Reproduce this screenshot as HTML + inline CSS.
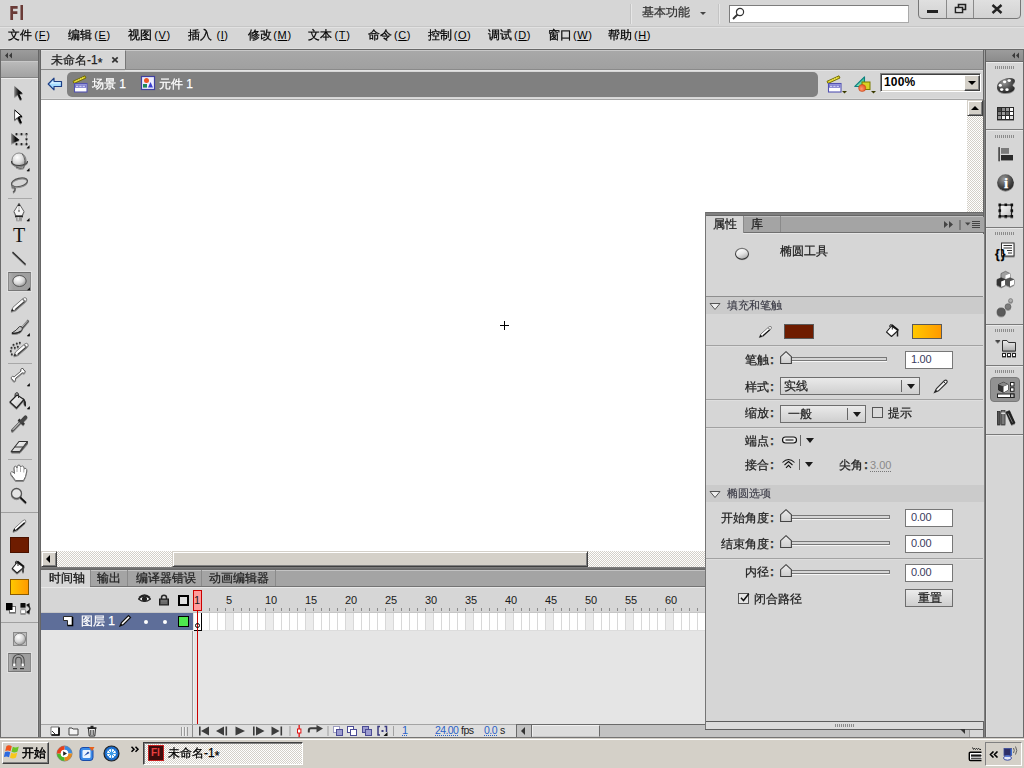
<!DOCTYPE html>
<html lang="zh-CN">
<head>
<meta charset="utf-8">
<title>未命名-1* - Flash</title>
<style>
html,body{margin:0;padding:0;}
body{width:1024px;height:768px;overflow:hidden;background:#d6d6d6;position:relative;
 font-family:"Liberation Sans","WenQuanYi Zen Hei","Noto Sans CJK SC",sans-serif;font-size:12px;color:#000;}
div,span,svg{position:absolute;box-sizing:border-box;}
.t{white-space:nowrap;line-height:14px;height:14px;-webkit-text-stroke:0.25px currentColor;}
.n{-webkit-text-stroke:0 !important;}
.c{position:static;display:inline-block;width:6px;text-align:center;font-weight:bold;color:#333;}
.m u{text-decoration:underline;}
.sep{background:#a0a0a0;height:1px;}
.vb{background:#fff;border:1px solid #777;}
.vb span{left:5px;top:1px;color:#3a3a60;line-height:14px;letter-spacing:-0.300px;}
.grip{height:3px;width:20px;background:repeating-linear-gradient(90deg,#8c8c8c 0 1px,transparent 1px 2px);}
.dith{background-color:#fff;background-image:conic-gradient(#d4d0c8 25%,#fff 0 50%,#d4d0c8 0 75%,#fff 0);background-size:2px 2px;}
.sbtn{background:#d4d0c8;border:1px solid #d4d0c8;border-right-color:#404040;border-bottom-color:#404040;box-shadow:inset 1px 1px 0 #fff, inset -1px -1px 0 #808080;}
</style>
</head>
<body>
<!-- title bar -->
<div style="left:0;top:0;width:1024px;height:27px;background:#d6d6d6"></div>
<div style="left:0;top:26px;width:1024px;height:1px;background:#c6c6c6"></div>
<div style="left:0;top:27px;width:1024px;height:1px;background:#e2e2e2;z-index:1"></div>
<div style="left:0;top:28px;width:1024px;height:21px;background:#d6d6d6"></div>
<div style="left:0;top:48px;width:1024px;height:1px;background:#dedede"></div>
<div class="t n" style="left:9px;top:1px;font:bold 20px/24px 'DejaVu Sans Condensed','DejaVu Sans','Liberation Sans',sans-serif;font-stretch:condensed;height:24px;color:#6a3b37;letter-spacing:0.5px;transform:scaleX(0.8);transform-origin:0 0">Fl</div>
<div style="left:630px;top:4px;width:1px;height:20px;background:#c4c4c4"></div>
<div style="left:631px;top:4px;width:1px;height:20px;background:#e6e6e6"></div>
<div class="t" style="left:642px;top:5px;color:#333">基本功能</div>
<div style="left:700px;top:12px;width:0;height:0;border:3px solid transparent;border-top:3px solid #444;border-bottom:0"></div>
<div style="left:718px;top:4px;width:1px;height:20px;background:#c4c4c4"></div>
<div style="left:719px;top:4px;width:1px;height:20px;background:#e6e6e6"></div>
<div style="left:729px;top:5px;width:180px;height:18px;background:#fff;border:1px solid #7c7c7c;border-bottom-color:#aaa;border-right-color:#aaa"></div>
<svg style="left:731px;top:7px" width="16" height="14" viewBox="0 0 16 14"><circle cx="9" cy="5" r="3.6" fill="none" stroke="#333" stroke-width="1.2"/><path d="M6.5 7.5 L2 12" stroke="#333" stroke-width="1.8"/></svg>
<!-- window buttons -->
<div style="left:918px;top:-4px;width:103px;height:23px;border:1px solid #777;border-radius:0 0 4px 4px;background:linear-gradient(#e2e2e2,#d2d2d2)"></div>
<div style="left:946px;top:0;width:1px;height:18px;background:#8a8a8a"></div>
<div style="left:973px;top:0;width:1px;height:18px;background:#8a8a8a"></div>
<div style="left:927px;top:10px;width:11px;height:3px;background:#222"></div>
<svg style="left:954px;top:3px" width="13" height="11" viewBox="0 0 13 11"><path d="M4.5 1.5h7v5h-7z M1.5 4.500h7v5h-7z" fill="none" stroke="#222" stroke-width="1.6"/><rect x="2.3" y="5.3" width="5.4" height="3.4" fill="#dadada"/></svg>
<svg style="left:991px;top:4px" width="12" height="10" viewBox="0 0 12 10"><path d="M1.500 1 L10.5 9 M10.5 1 L1.500 9" stroke="#222" stroke-width="2.4"/></svg>
<!-- menu -->
<div class="t m" style="left:8px;top:28px">文件<span class="n" style="position:static;display:inline-block;width:19px;text-align:center;letter-spacing:0.600px;margin-left:1px;font-size:11px">(<u>F</u>)</span></div>
<div class="t m" style="left:68px;top:28px">编辑<span class="n" style="position:static;display:inline-block;width:19px;text-align:center;letter-spacing:0.600px;margin-left:1px;font-size:11px">(<u>E</u>)</span></div>
<div class="t m" style="left:128px;top:28px">视图<span class="n" style="position:static;display:inline-block;width:19px;text-align:center;letter-spacing:0.600px;margin-left:1px;font-size:11px">(<u>V</u>)</span></div>
<div class="t m" style="left:188px;top:28px">插入<span class="n" style="position:static;display:inline-block;width:19px;text-align:center;letter-spacing:0.600px;margin-left:1px;font-size:11px">(<u>I</u>)</span></div>
<div class="t m" style="left:248px;top:28px">修改<span class="n" style="position:static;display:inline-block;width:19px;text-align:center;letter-spacing:0.600px;margin-left:1px;font-size:11px">(<u>M</u>)</span></div>
<div class="t m" style="left:308px;top:28px">文本<span class="n" style="position:static;display:inline-block;width:19px;text-align:center;letter-spacing:0.600px;margin-left:1px;font-size:11px">(<u>T</u>)</span></div>
<div class="t m" style="left:368px;top:28px">命令<span class="n" style="position:static;display:inline-block;width:19px;text-align:center;letter-spacing:0.600px;margin-left:1px;font-size:11px">(<u>C</u>)</span></div>
<div class="t m" style="left:428px;top:28px">控制<span class="n" style="position:static;display:inline-block;width:19px;text-align:center;letter-spacing:0.600px;margin-left:1px;font-size:11px">(<u>O</u>)</span></div>
<div class="t m" style="left:488px;top:28px">调试<span class="n" style="position:static;display:inline-block;width:19px;text-align:center;letter-spacing:0.600px;margin-left:1px;font-size:11px">(<u>D</u>)</span></div>
<div class="t m" style="left:548px;top:28px">窗口<span class="n" style="position:static;display:inline-block;width:19px;text-align:center;letter-spacing:0.600px;margin-left:1px;font-size:11px">(<u>W</u>)</span></div>
<div class="t m" style="left:608px;top:28px">帮助<span class="n" style="position:static;display:inline-block;width:19px;text-align:center;letter-spacing:0.600px;margin-left:1px;font-size:11px">(<u>H</u>)</span></div>
<!-- line under menu -->
<div style="left:0;top:49px;width:1024px;height:1px;background:#686868"></div>
<!-- document tab bar -->
<div style="left:41px;top:50px;width:943px;height:19px;background:linear-gradient(#a8a8a8,#a0a0a0);border-top:1px solid #c8c8c8"></div>
<div style="left:41px;top:50px;width:85px;height:19px;background:#d6d6d6;border-right:1px solid #777;border-top:1px solid #e2e2e2"></div>
<div class="t" style="left:51px;top:53px;color:#222">未命名-1<span style="position:relative;top:3px">*</span></div>
<svg style="left:111px;top:56px" width="8" height="8" viewBox="0 0 8 8"><path d="M1.300 1.300 L6.700 6.300 M6.700 1.300 L1.300 6.300" stroke="#333" stroke-width="1.700"/></svg>
<div style="left:41px;top:69px;width:943px;height:1px;background:#8a8a8a"></div>
<!-- edit bar -->
<div style="left:41px;top:70px;width:943px;height:29px;background:#d6d6d6"></div>
<div style="left:125px;top:70px;width:859px;height:1px;background:#e4e4e4"></div>
<div style="left:41px;top:99px;width:943px;height:1px;background:#a4a4a4"></div>
<div style="left:67px;top:72px;width:751px;height:25px;background:#808080;border-radius:5px"></div>
<div style="left:41px;top:98px;width:943px;height:1px;background:#dcdcdc"></div>
<svg style="left:47px;top:77px" width="16" height="14" viewBox="0 0 16 14"><path d="M1.200 7 L7 1.200 V4.500 H14.5 V9.500 H7 V12.8 Z" fill="#a6dcff" stroke="#1d3f86" stroke-width="1.200" stroke-linejoin="round"/><path d="M3 7 L6.300 3.700 V5.500 H13.500 V6.500 H5 Z" fill="#e4f5ff"/></svg>
<!-- scene icon -->
<svg style="left:72px;top:75px" width="17" height="20" viewBox="0 0 17 20"><path d="M1 6.300 L13 0.800 L14 3 L2 8.500 Z" fill="#dccf20" stroke="#6a6400" stroke-width="0.900"/><path d="M3.500 6.300 L12 2.400" stroke="#f6f080" stroke-width="1" stroke-dasharray="1.200 1.200"/><rect x="2.500" y="8.500" width="12.500" height="8.500" fill="#fff" stroke="#5252b2" stroke-width="1.100"/><rect x="3" y="9" width="11.500" height="3.800" fill="#7676cc"/><path d="M4 11.300 H13.500" stroke="#e4e4ff" stroke-width="1" stroke-dasharray="2.300 1"/><path d="M3.500 9.700 H14" stroke="#a4a4e0" stroke-width="0.800"/></svg>
<div class="t" style="left:92px;top:77px;color:#fff">场景 1</div>
<!-- symbol icon -->
<svg style="left:140px;top:75px" width="16" height="16" viewBox="0 0 16 16"><rect x="1.500" y="1.500" width="13" height="13" fill="#ececff" stroke="#4040a0" stroke-width="1.200"/><circle cx="6.500" cy="5.500" r="2.500" fill="#ee5520"/><rect x="3" y="9" width="4" height="3.600" fill="#1e8a5a"/><path d="M8 12.600 L10.500 7 L13 12.600 Z" fill="#3a3ed0"/></svg>
<div class="t" style="left:159px;top:77px;color:#fff">元件 1</div>
<!-- edit scene / symbol buttons -->
<svg style="left:826px;top:75px" width="23" height="20" viewBox="0 0 23 20"><path d="M1 6.300 L13 0.800 L14 3 L2 8.500 Z" fill="#dccf20" stroke="#6a6400" stroke-width="0.900"/><path d="M3.500 6.300 L12 2.400" stroke="#f6f080" stroke-width="1" stroke-dasharray="1.200 1.200"/><rect x="2.500" y="8.500" width="12.500" height="8.500" fill="#fff" stroke="#5252b2" stroke-width="1.100"/><rect x="3" y="9" width="11.500" height="3.800" fill="#7676cc"/><path d="M4 11.300 H13.500" stroke="#e4e4ff" stroke-width="1" stroke-dasharray="2.300 1"/><path d="M3.500 9.700 H14" stroke="#a4a4e0" stroke-width="0.800"/><path d="M16 16 h5 l-2.500 2.500 z" fill="#3a3a00"/></svg>
<svg style="left:853px;top:75px" width="25" height="20" viewBox="0 0 25 20"><defs><linearGradient id="sg1" x1="0" x2="1" y1="1" y2="0"><stop offset="0" stop-color="#8ae8c0"/><stop offset="1" stop-color="#30c090"/></linearGradient><radialGradient id="sg2" cx="0.4" cy="0.6" r="0.7"><stop offset="0" stop-color="#ff9a70"/><stop offset="1" stop-color="#e04818"/></radialGradient></defs><path d="M1.800 11.500 L11.500 1.800 V11.500 Z" fill="url(#sg1)" stroke="#108080" stroke-width="1.100" stroke-linejoin="round"/><rect x="9" y="7" width="8" height="7.500" fill="#d8d224" stroke="#7a7a00" stroke-width="1"/><circle cx="9.200" cy="13" r="3.600" fill="url(#sg2)" stroke="#c04010" stroke-width="0.500"/><path d="M18 16 h5 l-2.500 2.500 z" fill="#3a3a00"/></svg>
<!-- zoom combo -->
<div style="left:880px;top:73px;width:101px;height:19px;background:#fff;border:1px solid #808080;border-right-color:#fff;border-bottom-color:#fff;box-shadow:inset 1px 1px 0 #404040, inset -1px -1px 0 #d4d0c8"></div>
<div class="t n" style="left:884px;top:75px;font-weight:bold;font-size:12px;letter-spacing:0.200px">100%</div>
<div style="left:964px;top:75px;width:16px;height:16px;background:#d4d0c8;border:1px solid #fff;border-right-color:#404040;border-bottom-color:#404040;box-shadow:inset -1px -1px 0 #808080"></div>
<div style="left:968px;top:81px;width:0;height:0;border:4px solid transparent;border-top:4px solid #000;border-bottom:0"></div>
<!-- stage -->
<div style="left:41px;top:100px;width:926px;height:451px;background:#fff"></div>
<div style="left:504px;top:321px;width:1px;height:9px;background:#000"></div><div style="left:500px;top:325px;width:9px;height:1px;background:#000"></div>
<!-- vertical scrollbar -->
<div class="dith" style="left:967px;top:100px;width:16px;height:451px"></div>
<div class="sbtn" style="left:967px;top:100px;width:16px;height:16px"></div>
<div style="left:971px;top:106px;width:0;height:0;border:4px solid transparent;border-bottom:4px solid #000;border-top:0"></div>
<!-- horizontal scrollbar -->
<div class="dith" style="left:41px;top:551px;width:664px;height:16px"></div>
<div class="sbtn" style="left:41px;top:551px;width:16px;height:16px"></div>
<div style="left:46px;top:555px;width:0;height:0;border:4px solid transparent;border-right:4px solid #000;border-left:0"></div>
<div class="sbtn" style="left:172px;top:551px;width:416px;height:16px"></div>
<!-- tools panel frame -->
<div style="left:0;top:50px;width:41px;height:688px;background:#d6d6d6"></div>
<div style="left:0;top:50px;width:1px;height:688px;background:#6a6a6a"></div>
<div style="left:37px;top:79px;width:1px;height:658px;background:#dedede"></div>
<div style="left:38px;top:50px;width:1px;height:688px;background:#666"></div>
<div style="left:39px;top:50px;width:1px;height:688px;background:#808080"></div>
<div style="left:40px;top:50px;width:1px;height:688px;background:#666"></div>
<div style="left:1px;top:50px;width:37px;height:11px;background:linear-gradient(#9c9c9c,#8c8c8c)"></div>
<svg style="left:4px;top:52px" width="9" height="7" viewBox="0 0 9 7"><path d="M4 0.500 V6.500 L1 3.500 Z M8 0.500 V6.500 L5 3.500 Z" fill="#3a3a3a"/></svg>
<div style="left:1px;top:61px;width:37px;height:16px;background:linear-gradient(#bababa,#a2a2a2);border-top:1px solid #c8c8c8"></div>
<div style="left:1px;top:77px;width:37px;height:1px;background:#858585"></div>
<div style="left:1px;top:78px;width:37px;height:1px;background:#ececec"></div>
<div style="left:0;top:737px;width:41px;height:1px;background:#747474"></div>
<!-- separators -->
<div style="left:8px;top:198px;width:24px;height:1px;background:#a8a8a8"></div>
<div style="left:8px;top:363px;width:24px;height:1px;background:#a8a8a8"></div>
<div style="left:8px;top:459px;width:24px;height:1px;background:#a8a8a8"></div>
<div style="left:1px;top:512px;width:37px;height:1px;background:#a0a0a0"></div>
<div style="left:1px;top:622px;width:37px;height:1px;background:#a0a0a0"></div>
<!-- selected oval tool -->
<div style="left:8px;top:272px;width:23px;height:19px;background:linear-gradient(90deg,#b0b0b0,#a0a0a0 20%,#9e9e9e);border:1px solid #8a8a8a;border-top-color:#6e6e6e;border-bottom-color:#777;box-shadow:0 0 0 1px rgba(255,255,255,0.25)"></div>
<!-- magnet selected -->
<div style="left:8px;top:653px;width:23px;height:19px;background:linear-gradient(90deg,#b0b0b0,#a0a0a0 20%,#9e9e9e);border:1px solid #8a8a8a;border-top-color:#6e6e6e;border-bottom-color:#777;box-shadow:0 0 0 1px rgba(255,255,255,0.25)"></div>
<!-- colour swatches -->
<div style="left:10px;top:537px;width:19px;height:16px;background:#6e1c00;border:1px solid #4a1200"></div>
<div style="left:10px;top:579px;width:19px;height:16px;background:linear-gradient(90deg,#ffc800,#ff9a00);border:1px solid #8a5a00"></div>
<!-- tool icons -->
<svg style="left:0;top:0" width="41" height="738" viewBox="0 0 41 738">
<defs>
<linearGradient id="gA" x1="0" x2="1" y1="0" y2="0"><stop offset="0" stop-color="#8a8a8a"/><stop offset="0.5" stop-color="#111"/><stop offset="1" stop-color="#000"/></linearGradient>
<radialGradient id="gS" cx="0.38" cy="0.32" r="0.75"><stop offset="0" stop-color="#fff"/><stop offset="0.55" stop-color="#d8d8d8"/><stop offset="1" stop-color="#8e8e8e"/></radialGradient>
<linearGradient id="gW" x1="0" x2="1" y1="0" y2="1"><stop offset="0" stop-color="#fff"/><stop offset="1" stop-color="#c4c4c4"/></linearGradient>
<filter id="ds" x="-30%" y="-30%" width="160%" height="170%"><feGaussianBlur in="SourceAlpha" stdDeviation="0.7"/><feOffset dx="0.3" dy="1"/><feComponentTransfer><feFuncA type="linear" slope="0.35"/></feComponentTransfer><feMerge><feMergeNode/><feMergeNode in="SourceGraphic"/></feMerge></filter>
<path id="tri" d="M0 3 H3 V0 Z" fill="#111"/>
</defs>
<g filter="url(#ds)">
<!-- selection arrow -->
<path d="M14.300 85.800 L22.800 93.500 L19.400 93.900 L21.800 99.300 L20 100.100 L17.500 94.800 L14.300 97.200 Z" fill="url(#gA)"/>
<!-- subselection arrow -->
<path d="M14.600 109.800 L22.200 116.700 L18.900 117 L21.500 122.600 L20 123.300 L17.300 117.800 L14.600 120 Z" fill="#fff" stroke="#333" stroke-width="0.800" stroke-linejoin="miter"/>
<path d="M15 110.300 L22 116.600 L18.600 116.800" fill="none" stroke="#000" stroke-width="1"/>
<path d="M18.300 117.200 L20.900 122.800" stroke="#000" stroke-width="1.900"/>
<!-- free transform -->
<path d="M11.200 133 L19.500 140 L11.200 143.800 Z" fill="url(#gA)"/>
<g fill="#111"><circle cx="16.500" cy="134" r="1.050"/><circle cx="21.500" cy="134" r="1.050"/><circle cx="26.500" cy="134" r="1.050"/><circle cx="26.500" cy="139" r="1.050"/><circle cx="16.500" cy="144" r="1.050"/><circle cx="21.500" cy="144" r="1.050"/><circle cx="26.500" cy="144" r="1.050"/></g>
<path d="M16.500 134 H26.500 V144 H16.500" fill="none" stroke="#777" stroke-width="0.600" stroke-dasharray="1 1"/>
<use href="#tri" x="26.500" y="145.300"/>
<!-- 3d rotation -->
<circle cx="19" cy="160" r="7" fill="url(#gS)" stroke="#6a6a6a" stroke-width="0.700"/>
<path d="M11.500 161 Q11 165.500 19.500 165.500 Q27.500 165 27.500 161" fill="none" stroke="#3a3a3a" stroke-width="1.100"/>
<path d="M22 153.500 Q27 160 23.500 168 Q20 169.500 16 167" fill="none" stroke="#555" stroke-width="0.900"/>
<use href="#tri" x="26.500" y="168"/>
<!-- lasso -->
<ellipse cx="19.500" cy="182.300" rx="8.200" ry="4.100" fill="none" stroke="#555" stroke-width="1.200" transform="rotate(-14 19.500 182.300)"/>
<path d="M11.800 185.500 Q13.500 188 15.200 188.500 Q15.500 190.500 13 192.200" fill="none" stroke="#555" stroke-width="1.300"/>
<circle cx="13" cy="186.800" r="1.500" fill="#777"/>
<!-- pen -->
<path d="M19 203.300 L24 211.500 L22 216 H16 L14 211.500 Z" fill="#f4f4f4" stroke="#666" stroke-width="1"/>
<path d="M19 203.300 L20.300 206 H17.700 Z" fill="#222"/>
<path d="M19 206 V211" stroke="#aaa" stroke-width="0.800"/>
<rect x="18" y="210.500" width="2" height="1" fill="#555"/>
<rect x="15" y="215.600" width="8" height="1.200" fill="#111"/>
<rect x="16" y="217" width="6" height="3.200" fill="#999"/>
<rect x="17.600" y="217" width="1.200" height="3.200" fill="#ddd"/>
<use href="#tri" x="26.500" y="218"/>
<!-- line -->
<path d="M12.500 252 L25.600 264.500" stroke="#2c2c2c" stroke-width="1.300"/>
</g>
<!-- oval (selected) -->
<ellipse cx="19.500" cy="281" rx="6.700" ry="5.500" fill="url(#gS)" stroke="#555" stroke-width="1"/>
<use href="#tri" x="27" y="287.200"/>
<g filter="url(#ds)">
<!-- pencil -->
<g transform="translate(11.200 311.300) rotate(-41)">
<path d="M0 0 L4 -1.900 H17 Q20 -1.900 20 0 Q20 1.900 17 1.900 H4 Z" fill="#fafafa" stroke="#555" stroke-width="0.700"/>
<path d="M0 0 L2.500 -1.300 V1.300 Z" fill="#222"/>
<path d="M4 1.300 H17" stroke="#333" stroke-width="1.100"/>
<rect x="16" y="-1.900" width="1.400" height="3.800" fill="#777"/>
</g>
<!-- brush -->
<path d="M28.500 320.300 L21.500 328.500" stroke="#555" stroke-width="2.200"/>
<path d="M27.800 320.600 L21 328" stroke="#e0e0e0" stroke-width="0.800"/>
<path d="M21.800 326.800 Q23.500 330.500 19 332.500 Q15 334 11.800 333 Q16.500 330.500 19.500 326.500 Z" fill="#c8c8c8" stroke="#3a3a3a" stroke-width="1"/>
<path d="M12 333.200 Q17 334 21 331" fill="none" stroke="#222" stroke-width="1.300"/>
<use href="#tri" x="26.800" y="333"/>
<!-- deco tool -->
<g fill="#333"><circle cx="13.500" cy="344.800" r="1"/><circle cx="16.800" cy="343.600" r="1"/><circle cx="19.800" cy="342.800" r="1"/><circle cx="11.500" cy="347.800" r="1"/><circle cx="14.800" cy="347.800" r="1"/><circle cx="17.800" cy="346.800" r="1"/><circle cx="10.800" cy="351" r="1"/><circle cx="11.800" cy="354.200" r="1"/></g>
<g transform="translate(13.800 356) rotate(-41)">
<path d="M0 0 L4 -1.900 H15.500 Q18.500 -1.900 18.500 0 Q18.500 1.900 15.500 1.900 H4 Z" fill="#fafafa" stroke="#555" stroke-width="0.700"/>
<path d="M0 0 L2.500 -1.300 V1.300 Z" fill="#222"/>
<path d="M4 1.300 H15.500" stroke="#333" stroke-width="1.100"/>
<rect x="14.500" y="-1.900" width="1.400" height="3.800" fill="#777"/>
</g>
<!-- bone -->
<g transform="translate(18.200 374.800) rotate(-40) scale(0.88)">
<path d="M-5 -1.200 H5 Q6 -3.800 8 -2.800 Q9.500 -1.800 8.300 0 Q9.500 1.800 8 2.800 Q6 3.800 5 1.200 H-5 Q-6 3.800 -8 2.800 Q-9.500 1.800 -8.300 0 Q-9.500 -1.800 -8 -2.800 Q-6 -3.800 -5 -1.200 Z" fill="#fff" stroke="#555" stroke-width="1"/>
</g>
<use href="#tri" x="26.800" y="383"/>
<!-- paint bucket -->
<path d="M10 402 L17 395 L24 399.500 L16.500 408 Z" fill="url(#gW)" stroke="#222" stroke-width="1.200" stroke-linejoin="round"/>
<path d="M15 396.500 Q14.500 392.500 17 392.500 Q19 392.800 18.500 398" fill="none" stroke="#333" stroke-width="1"/>
<path d="M22.500 398.500 Q26 400 25.500 406 Q24 405 24 402" fill="#222" stroke="#222" stroke-width="1"/>
<use href="#tri" x="26.800" y="406"/>
<!-- eyedropper -->
<path d="M12.300 430.500 L20.500 422" stroke="#555" stroke-width="2.600" stroke-linecap="round"/>
<path d="M12.800 429.800 L20 422.300" stroke="#e8e8e8" stroke-width="1"/>
<path d="M18.500 419.500 L24 424.500" stroke="#333" stroke-width="2.600"/>
<path d="M21.500 421.500 L25.500 417.300" stroke="#444" stroke-width="3.800" stroke-linecap="round"/>
<!-- eraser -->
<path d="M11.200 451.500 L19 441.500 H27.500 L19.800 451.500 Z" fill="url(#gW)" stroke="#333" stroke-width="1.100" stroke-linejoin="round"/>
<path d="M14.500 447 H23.200" stroke="#333" stroke-width="1"/>
<path d="M19.800 451.500 L27.500 441.500 V443.500 L20 452.300 H11.500" fill="none" stroke="#444" stroke-width="0.900"/>
<!-- hand -->
<path d="M15.500 480.500 L11 474.500 Q9.800 472.300 11.500 471.800 Q13 471.500 14.500 473.500 L14 468 Q14.200 466 15.500 466.200 Q16.800 466.300 17 468 L17.300 466.500 Q17.500 465 19 465 Q20.500 465.200 20.500 467 L21 466.800 Q21.500 465.800 22.800 466 Q24 466.500 24 468 L24.300 469 Q25 468 26 468.500 Q27 469.200 26.800 471 L25.500 476.500 L23.500 480.500 Z" fill="#fff" stroke="#666" stroke-width="1" stroke-linejoin="round"/>
<path d="M17 468 V472 M20.500 467.500 V472 M23.800 469 V472.500" stroke="#999" stroke-width="0.800"/>
<!-- zoom -->
<circle cx="16.500" cy="493.500" r="5" fill="#e4e4e4" stroke="#555" stroke-width="1.300"/>
<path d="M20.300 497.300 L26 502.800" stroke="#111" stroke-width="1.800"/>
<!-- stroke colour pencil -->
<g transform="translate(13 531.500) rotate(-42)">
<path d="M0 0 L3.500 -1.400 H14.500 Q16.800 -1.400 16.800 0 Q16.800 1.400 14.500 1.400 H3.500 Z" fill="#fff" stroke="#444" stroke-width="0.600"/>
<path d="M0 0 L3 -1.500 V1.500 Z" fill="#111"/>
<path d="M3.500 1.200 H14.500" stroke="#111" stroke-width="1.200"/>
</g>
<!-- fill colour bucket -->
<path d="M12.200 568.500 L17 562.500 L24 567.200 L17 573 Z" fill="#fff" stroke="#222" stroke-width="1.100" stroke-linejoin="round"/>
<path d="M15.500 563.500 Q15 561 17 561 Q18.500 561 18 566" fill="none" stroke="#222" stroke-width="1"/>
<path d="M17.500 561.300 L24 566.500" stroke="#111" stroke-width="1.600"/>
<path d="M23 567 V572.500" stroke="#333" stroke-width="1.500"/>
<!-- black & white -->
<rect x="9.500" y="606.500" width="6" height="6" fill="#fff" stroke="#555" stroke-width="0.800"/>
<rect x="6" y="603" width="6.500" height="7" fill="#000"/>
<!-- swap colours -->
<rect x="20.500" y="603" width="5" height="4.500" fill="#111"/>
<rect x="20.800" y="609.800" width="4.500" height="3.800" fill="#fff" stroke="#777" stroke-width="0.700"/>
<path d="M27.500 605 Q32.500 608.500 27.500 612" fill="none" stroke="#333" stroke-width="1.300"/>
<path d="M26 605 L29.500 603 V607 Z M26 612 L29.500 610 V614 Z" fill="#111"/>
</g>
<!-- object drawing -->
<rect x="13.500" y="632.500" width="13" height="13" fill="#bcbcbc" stroke="#8a8a8a" stroke-width="1"/>
<circle cx="19.800" cy="639" r="5.800" fill="url(#gS)" stroke="#7a7a7a" stroke-width="0.900"/>
<!-- magnet -->
<path d="M14.300 666.300 V660 A4.200 4.200 0 0 1 22.700 660 V666.300" fill="none" stroke="#4a4a4a" stroke-width="3.800"/>
<path d="M14.300 666.300 V660 A4.200 4.200 0 0 1 22.700 660 V666.300" fill="none" stroke="#a4a4a4" stroke-width="1.800"/>
<rect x="13.200" y="663.600" width="2.200" height="2.600" fill="#fff"/><rect x="21.600" y="663.600" width="2.200" height="2.600" fill="#fff"/>
<rect x="13" y="668" width="4" height="1.200" fill="#333"/><rect x="20" y="668" width="4" height="1.200" fill="#333"/>
</svg>
<div class="t n" style="left:13px;top:224px;font:20px/22px 'Liberation Serif',serif;height:22px;color:#111">T</div>
<!-- timeline panel -->
<div style="left:41px;top:567px;width:664px;height:3px;background:linear-gradient(#808080,#707070 50%,#666)"></div>
<div style="left:41px;top:570px;width:664px;height:17px;background:#a4a4a4;border-top:1px solid #c4c4c4"></div>
<div style="left:90px;top:586px;width:615px;height:1px;background:#747474"></div>
<div style="left:41px;top:570px;width:49px;height:17px;background:#d6d6d6"></div>
<div style="left:90px;top:570px;width:1px;height:16px;background:#8a8a8a"></div>
<div style="left:127px;top:570px;width:1px;height:16px;background:#8a8a8a"></div>
<div style="left:201px;top:570px;width:1px;height:16px;background:#8a8a8a"></div>
<div style="left:275px;top:570px;width:1px;height:16px;background:#8a8a8a"></div>
<div class="t" style="left:49px;top:571px;color:#111">时间轴</div>
<div class="t" style="left:97px;top:571px;color:#222">输出</div>
<div class="t" style="left:136px;top:571px;color:#222">编译器错误</div>
<div class="t" style="left:209px;top:571px;color:#222">动画编辑器</div>
<div style="left:41px;top:587px;width:664px;height:25px;background:#d6d6d6;border-top:1px solid #e8e8e8"></div>
<div style="left:41px;top:612px;width:664px;height:113px;background:#e5e5e5"></div>
<div style="left:41px;top:613px;width:152px;height:17px;background:#5e6e99"></div>
<div class="t" style="left:81px;top:614px;color:#fff">图层 1</div>
<div style="left:192px;top:631px;width:1px;height:106px;background:#9a9a9a"></div>
<div style="left:193px;top:631px;width:1px;height:93px;background:#f0f0f0"></div>
<div style="left:194px;top:613px;width:511px;height:18px;background:#fff;background-image:linear-gradient(90deg,transparent 7px,#d8d8d8 7px);background-size:8px 19px"></div>
<div style="left:226px;top:613px;width:7px;height:18px;background:#ececec"></div>
<div style="left:266px;top:613px;width:7px;height:18px;background:#ececec"></div>
<div style="left:306px;top:613px;width:7px;height:18px;background:#ececec"></div>
<div style="left:346px;top:613px;width:7px;height:18px;background:#ececec"></div>
<div style="left:386px;top:613px;width:7px;height:18px;background:#ececec"></div>
<div style="left:426px;top:613px;width:7px;height:18px;background:#ececec"></div>
<div style="left:466px;top:613px;width:7px;height:18px;background:#ececec"></div>
<div style="left:506px;top:613px;width:7px;height:18px;background:#ececec"></div>
<div style="left:546px;top:613px;width:7px;height:18px;background:#ececec"></div>
<div style="left:586px;top:613px;width:7px;height:18px;background:#ececec"></div>
<div style="left:626px;top:613px;width:7px;height:18px;background:#ececec"></div>
<div style="left:666px;top:613px;width:7px;height:18px;background:#ececec"></div>
<div style="left:706px;top:613px;width:7px;height:18px;background:#ececec"></div>
<div style="left:194px;top:630px;width:511px;height:1px;background:#dcdcdc"></div>
<div style="left:194px;top:608px;width:511px;height:3px;background-image:linear-gradient(90deg,transparent 7px,#8c8c8c 7px);background-size:8px 3px"></div>
<div style="left:41px;top:612px;width:664px;height:1px;background:#c6c6c6"></div>
<div class="t n" style="left:226px;top:593px;font-size:11px;color:#1a1a1a">5</div>
<div class="t n" style="left:265px;top:593px;font-size:11px;color:#1a1a1a">10</div>
<div class="t n" style="left:305px;top:593px;font-size:11px;color:#1a1a1a">15</div>
<div class="t n" style="left:345px;top:593px;font-size:11px;color:#1a1a1a">20</div>
<div class="t n" style="left:385px;top:593px;font-size:11px;color:#1a1a1a">25</div>
<div class="t n" style="left:425px;top:593px;font-size:11px;color:#1a1a1a">30</div>
<div class="t n" style="left:465px;top:593px;font-size:11px;color:#1a1a1a">35</div>
<div class="t n" style="left:505px;top:593px;font-size:11px;color:#1a1a1a">40</div>
<div class="t n" style="left:545px;top:593px;font-size:11px;color:#1a1a1a">45</div>
<div class="t n" style="left:585px;top:593px;font-size:11px;color:#1a1a1a">50</div>
<div class="t n" style="left:625px;top:593px;font-size:11px;color:#1a1a1a">55</div>
<div class="t n" style="left:665px;top:593px;font-size:11px;color:#1a1a1a">60</div>
<div style="left:193px;top:590px;width:9px;height:21px;background:#ff9c9c;border:1px solid #cc0000"></div>
<div class="t n" style="left:194px;top:593px;font-size:11px;color:#1a1a1a">1</div>
<div style="left:197px;top:611px;width:1px;height:114px;background:#cc0000"></div>
<div style="left:194px;top:613px;width:8px;height:18px;border:1px solid #000;border-top:0;border-left:0;background:#fff"></div>
<div style="left:197px;top:611px;width:1px;height:20px;background:#cc0000"></div>
<div style="left:195px;top:623px;width:5px;height:5px;border:1px solid #000;border-radius:50%"></div>
<svg style="left:138px;top:594px" width="13" height="11" viewBox="0 0 13 11"><path d="M0.500 5 Q6.500 -1 12.500 5 Q6.500 10 0.500 5 Z" fill="#fff" stroke="#222" stroke-width="1.200"/><circle cx="6.500" cy="5" r="2.600" fill="#222"/><path d="M1 3.500 Q6.500 -1.500 12 3.500" fill="none" stroke="#222" stroke-width="1.500"/></svg>
<svg style="left:159px;top:594px" width="10" height="12" viewBox="0 0 10 12"><path d="M2.500 5 V3.800 a2.500 2.500 0 0 1 5 0 V5" fill="none" stroke="#2a2a2a" stroke-width="1.500"/><rect x="0.500" y="5" width="9" height="6" fill="#4a4a4a" stroke="#1a1a1a"/><rect x="2" y="6.500" width="6" height="1" fill="#9a9a9a"/><rect x="2" y="8.500" width="6" height="1" fill="#888"/></svg>
<div style="left:178px;top:595px;width:11px;height:11px;border:2px solid #000;background:#e0e0e0"></div>
<svg style="left:62px;top:615px" width="12" height="12" viewBox="0 0 12 12"><path d="M1.500 1.500 H10.500 V10.500 H5.500 V5.500 H1.500 Z" fill="#fff" stroke="#2a2a2a" stroke-width="1"/><path d="M10.500 2 V10.500 H5.500" fill="none" stroke="#000" stroke-width="1.600"/></svg>
<svg style="left:119px;top:614px" width="13" height="13" viewBox="0 0 13 13"><path d="M1 12 L2.500 8.500 L9.500 1.500 L11.500 3.500 L4.500 10.500 Z" fill="#fff" stroke="#111" stroke-width="1.200"/><path d="M1 12 L3.500 11 L2 9.500 Z" fill="#111"/></svg>
<div style="left:143.500px;top:620px;width:4px;height:4px;background:#fff;border-radius:50%"></div>
<div style="left:162.500px;top:620px;width:4px;height:4px;background:#fff;border-radius:50%"></div>
<div style="left:178px;top:616px;width:11px;height:11px;border:1px solid #000;background:#4ee84e"></div>
<div style="left:41px;top:724px;width:475px;height:1px;background:#a4a4a4"></div>
<div style="left:516px;top:724px;width:189px;height:1px;background:#6a6a6a"></div>
<div style="left:41px;top:725px;width:664px;height:12px;background:#dedede"></div>
<div style="left:41px;top:737px;width:943px;height:1px;background:#747474"></div>
<div style="left:192px;top:725px;width:1px;height:12px;background:#8a8a8a"></div>
<svg style="left:50px;top:726px" width="10" height="10" viewBox="0 0 10 10"><path d="M1 1 H9 V9 H1 Z" fill="#fff" stroke="#555" stroke-width="0.800"/><path d="M9 1.500 V9 H1.500" fill="none" stroke="#000" stroke-width="1.600"/><path d="M2 5 L5 8" stroke="#333"/></svg>
<svg style="left:68px;top:726px" width="11" height="10" viewBox="0 0 11 10"><path d="M1 2 H4 L5 3 H10 V9 H1 Z" fill="#f4f4f4" stroke="#444" stroke-width="1"/></svg>
<svg style="left:87px;top:725px" width="10" height="12" viewBox="0 0 10 12"><path d="M1.500 3.500 H8.500 L7.800 11 H2.200 Z" fill="#eee" stroke="#222" stroke-width="1"/><path d="M0.500 3 H9.500 M3.500 1.500 H6.500" stroke="#222" stroke-width="1.400"/><path d="M3.500 5 V10 M5 5 V10 M6.500 5 V10" stroke="#444" stroke-width="0.800"/></svg>
<div style="left:181px;top:727px;width:7px;height:9px;background:repeating-linear-gradient(90deg,#9a9a9a 0 1px,#eee 1px 2px,transparent 2px 3px)"></div>
<svg style="left:198px;top:725px" width="190" height="12" viewBox="0 0 190 12">
<g fill="#3c3c3c"><rect x="1" y="1.500" width="1.600" height="9"/><path d="M11 1.500 V10.500 L3 6 Z"/>
<path d="M26 1.500 V10.500 L18 6 Z"/><rect x="27.500" y="1.500" width="1.600" height="9"/>
<path d="M37.500 1.500 V10.500 L47 6 Z"/>
<rect x="55" y="1.500" width="1.600" height="9"/><path d="M58 1.500 V10.500 L66.500 6 Z"/>
<path d="M73.500 1.500 V10.500 L81.500 6 Z"/><rect x="82.500" y="1.500" width="1.600" height="9"/></g>
<rect x="91.500" y="1" width="1" height="10" fill="#a0a0a0"/>
<rect x="100.500" y="0" width="1.300" height="12" fill="#e01010"/><rect x="99.500" y="4" width="3.400" height="4" fill="#fff" stroke="#e01010" stroke-width="1"/>
<path d="M110.800 7.500 V5.500 Q110.800 3.200 113 3.200 H119" fill="none" stroke="#3c3c3c" stroke-width="2"/><path d="M118.500 0 L125 3.500 L118.500 7.500 Z" fill="#3c3c3c"/><path d="M110 7.500 H115 V5.800 H112.500" fill="none" stroke="#3c3c3c" stroke-width="0"/>
<rect x="129.500" y="1" width="1" height="10" fill="#a0a0a0"/>
<g stroke="#4a4a94" stroke-width="1">
<rect x="135.500" y="1.500" width="6" height="6" fill="#fff" stroke-dasharray="1 1"/><rect x="138.500" y="4.500" width="6" height="6" fill="#9c9cd0"/>
<rect x="149.500" y="1.500" width="6" height="6" fill="#fff"/><rect x="152.500" y="4.500" width="6" height="6" fill="#fff"/>
<rect x="164.500" y="1.500" width="6" height="6" fill="#9c9cd0"/><rect x="167.500" y="4.500" width="6" height="6" fill="#9c9cd0"/>
</g>
<path d="M182 1.500 H180 V10 H182 M186.500 1.500 H188.500 V7" fill="none" stroke="#3a3a80" stroke-width="1.500"/><rect x="183.500" y="5" width="2" height="2" fill="#3a3a80"/><path d="M189.500 7 V11 H185.500 Z" fill="#111"/>
</svg>
<div style="left:393px;top:726px;width:1px;height:10px;background:#a0a0a0"></div>
<div class="t n" style="left:402px;top:723px;font-size:11px;color:#2a62c8">1</div>
<div style="left:402px;top:735px;width:6px;height:1px;background:repeating-linear-gradient(90deg,#2a62c8 0 1px,transparent 1px 2px)"></div>
<div class="t n" style="left:435px;top:723px;font-size:10.500px;color:#2a62c8;letter-spacing:-0.600px">24.00</div>
<div style="left:435px;top:735px;width:23px;height:1px;background:repeating-linear-gradient(90deg,#2a62c8 0 1px,transparent 1px 2px)"></div>
<div class="t n" style="left:461px;top:723px;font-size:10.500px;color:#222;letter-spacing:-0.500px">fps</div>
<div class="t n" style="left:484px;top:723px;font-size:10.500px;color:#2a62c8;letter-spacing:-0.500px">0.0</div>
<div style="left:484px;top:735px;width:13px;height:1px;background:repeating-linear-gradient(90deg,#2a62c8 0 1px,transparent 1px 2px)"></div>
<div class="t n" style="left:500px;top:723px;font-size:10.500px;color:#222">s</div>
<div style="left:516px;top:725px;width:189px;height:12px;background:#c2c2c2;border-left:1px solid #6a6a6a"></div>
<div style="left:517px;top:725px;width:15px;height:12px;background:#c2c2c2;border-right:1px solid #6a6a6a"></div>
<div style="left:521px;top:727px;width:0;height:0;border:4px solid transparent;border-right:4px solid #333;border-left:0"></div>
<div style="left:532px;top:725px;width:68px;height:12px;background:#dcdcdc;border:1px solid #f0f0f0;border-right-color:#6a6a6a;border-bottom-color:#c8c8c8"></div>
<!-- properties panel -->
<div style="left:705px;top:212px;width:279px;height:518px;background:#d6d6d6"></div>
<div style="left:705px;top:212px;width:279px;height:4px;background:linear-gradient(#6c6c6c 25%,#808080 25% 75%,#666 75%)"></div>
<div style="left:705px;top:212px;width:1px;height:518px;background:#757575"></div>
<div style="left:743px;top:216px;width:241px;height:17px;background:#a4a4a4;border-top:1px solid #c0c0c0"></div>
<div style="left:743px;top:232px;width:241px;height:1px;background:#707070"></div>
<div style="left:743px;top:233px;width:241px;height:1px;background:#e6e6e6"></div>
<div style="left:743px;top:216px;width:1px;height:17px;background:#8a8a8a"></div>
<div style="left:780px;top:216px;width:1px;height:16px;background:#8a8a8a"></div>
<div class="t" style="left:713px;top:217px;color:#222">属性</div>
<div class="t" style="left:751px;top:217px;color:#222">库</div>
<svg style="left:943px;top:220px" width="40" height="10" viewBox="0 0 40 10"><path d="M1 1 V8 L5 4.500 Z M6 1 V8 L10 4.500 Z" fill="#444"/><rect x="16.500" y="0" width="1" height="10" fill="#555"/><path d="M22 2.500 H27.500 L24.750 5.500 Z" fill="#444"/><path d="M29 1.500 H37 M29 3.500 H37 M29 5.500 H37 M29 7.500 H37" stroke="#444" stroke-width="1"/></svg>
<svg style="left:734px;top:247px" width="16" height="15" viewBox="0 0 16 15"><defs><linearGradient id="og" x1="0.2" x2="0.7" y1="0" y2="1"><stop offset="0" stop-color="#fff"/><stop offset="0.5" stop-color="#e6e6e6"/><stop offset="1" stop-color="#a8a8a8"/></linearGradient><linearGradient id="ogs" x1="0" x2="0" y1="0" y2="1"><stop offset="0" stop-color="#7a7a7a"/><stop offset="1" stop-color="#222"/></linearGradient></defs><ellipse cx="8.300" cy="7.800" rx="6.600" ry="5.500" fill="#000" opacity="0.180"/><ellipse cx="8" cy="6.800" rx="6.500" ry="5.400" fill="url(#og)" stroke="url(#ogs)" stroke-width="1.100"/></svg>
<div class="t" style="left:780px;top:244px;color:#222">椭圆工具</div>
<div style="left:706px;top:296px;width:278px;height:1px;background:#8e8e8e"></div>
<div style="left:706px;top:297px;width:278px;height:17px;background:#cbcbcb"></div>
<svg style="left:709px;top:302px" width="12" height="9" viewBox="0 0 12 9"><path d="M1 1.500 H11 L6 7.500 Z" fill="#eee" stroke="#555" stroke-width="1"/></svg>
<div class="t" style="left:727px;top:298px;font-size:11px;color:#33333f;-webkit-text-stroke-width:0.100px">填充和笔触</div>
<svg style="left:757px;top:324px" width="16" height="16" viewBox="757 324 16 16"><g transform="translate(759.300 337.500) rotate(-42)"><path d="M0 0 L3.500 -1.500 H13.500 Q16 -1.500 16 0 Q16 1.500 13.500 1.500 H3.500 Z" fill="#fff" stroke="#444" stroke-width="0.600"/><path d="M0 0 L3 -1.500 V1.500 Z" fill="#111"/><path d="M3.500 1.200 H13.500" stroke="#111" stroke-width="1.200"/><rect x="12.500" y="-1.500" width="1.200" height="3" fill="#888"/></g></svg>
<div style="left:784px;top:324px;width:30px;height:15px;background:#6e1c00;border:1px solid #5a5a5a"></div>
<svg style="left:885px;top:323px" width="16" height="16" viewBox="885 323 16 16"><path d="M886.500 332 L891.500 326 L898 330.500 L891.500 336.500 Z" fill="#fff" stroke="#222" stroke-width="1.100" stroke-linejoin="round"/><path d="M889.800 327 Q889.300 324.500 891.300 324.500 Q892.800 324.500 892.300 329.500" fill="none" stroke="#222" stroke-width="1"/><path d="M891.800 324.800 L898.300 330" stroke="#111" stroke-width="1.600"/><path d="M897.500 330.500 V336.500" stroke="#222" stroke-width="1.500"/></svg>
<div style="left:912px;top:324px;width:30px;height:15px;background:linear-gradient(90deg,#ffc800,#ff9a00);border:1px solid #5a5a5a"></div>
<div style="left:706px;top:345px;width:278px;height:1px;background:#a2a2a2"></div>
<div style="left:706px;top:346px;width:278px;height:1px;background:#dedede"></div>
<div class="t" style="right:249px;top:353px;color:#222">笔触<span class="c">:</span></div>
<div style="left:791px;top:357px;width:96px;height:4px;background:#d6d6d6;border:1px solid #787878;border-left:0"></div><div style="left:791px;top:361px;width:96px;height:1px;background:#f6f6f6"></div>
<svg style="left:780px;top:351px" width="12" height="14" viewBox="0 0 12 14"><defs><linearGradient id="th351" x1="0" x2="0" y1="0" y2="1"><stop offset="0" stop-color="#ececec"/><stop offset="1" stop-color="#cecece"/></linearGradient></defs><path d="M6 0.700 L11.400 5.700 V12.500 H0.600 V5.700 Z" fill="url(#th351)" stroke="#444" stroke-width="1.100"/></svg>
<div class="vb" style="left:905px;top:351px;width:48px;height:18px"><span class="t n" style="font-size:11px;top:0px">1.00</span></div>
<div class="t" style="right:249px;top:380px;color:#222">样式<span class="c">:</span></div>
<div style="left:780px;top:377px;width:140px;height:18px;background:linear-gradient(#eaeaea,#cfcfcf);border:1px solid #6e6e6e"></div>
<div class="t" style="left:784px;top:379px;color:#222">实线</div>
<div style="left:901px;top:380px;width:1px;height:12px;background:#666"></div>
<div style="left:907px;top:384px;width:0;height:0;border:4px solid transparent;border-top:5px solid #1a1a1a;border-bottom:0"></div>
<svg style="left:933px;top:378px" width="16" height="16" viewBox="0 0 16 16"><path d="M1.500 14.500 L3.500 10.500 L11.500 2.500 Q13 1.500 14 2.800 Q14.800 4 13.500 5 L5.500 12.800 Z" fill="#f4f4f4" stroke="#333" stroke-width="1.100"/><path d="M1.500 14.500 L4.500 13.500 L2.800 11.500 Z" fill="#222"/><path d="M10.500 3.500 L12.800 5.800" stroke="#333"/></svg>
<div style="left:706px;top:399px;width:278px;height:1px;background:#a2a2a2"></div>
<div style="left:706px;top:400px;width:278px;height:1px;background:#dedede"></div>
<div class="t" style="right:249px;top:406px;color:#222">缩放<span class="c">:</span></div>
<div style="left:780px;top:405px;width:86px;height:18px;background:linear-gradient(#eaeaea,#cfcfcf);border:1px solid #6e6e6e"></div>
<div class="t" style="left:788px;top:407px;color:#222">一般</div>
<div style="left:847px;top:408px;width:1px;height:12px;background:#666"></div>
<div style="left:853px;top:412px;width:0;height:0;border:4px solid transparent;border-top:5px solid #1a1a1a;border-bottom:0"></div>
<div style="left:872px;top:407px;width:11px;height:11px;background:#dadada;border:1px solid #555"></div>
<div class="t" style="left:888px;top:406px;color:#222">提示</div>
<div style="left:706px;top:427px;width:278px;height:1px;background:#a2a2a2"></div>
<div style="left:706px;top:428px;width:278px;height:1px;background:#dedede"></div>
<div class="t" style="right:249px;top:434px;color:#222">端点<span class="c">:</span></div>
<svg style="left:781px;top:435px" width="18" height="10" viewBox="0 0 18 10"><rect x="1.500" y="2" width="14" height="6" rx="3" fill="#eee" stroke="#111" stroke-width="1.150"/><path d="M4.500 5 H12.500" stroke="#111" stroke-width="1.100"/></svg>
<div style="left:800px;top:435px;width:1px;height:11px;background:#666"></div>
<div style="left:806px;top:438px;width:0;height:0;border:4px solid transparent;border-top:5px solid #1a1a1a;border-bottom:0"></div>
<div class="t" style="right:249px;top:458px;color:#222">接合<span class="c">:</span></div>
<svg style="left:781px;top:457px" width="16" height="12" viewBox="0 0 16 12"><path d="M1.500 5.500 Q7.500 -0.500 13.500 5.500" fill="none" stroke="#111" stroke-width="1.050"/><path d="M3.500 8 L7.500 4.500 L11.500 8" fill="none" stroke="#111" stroke-width="1.050"/><path d="M5 10.800 L7.500 8.300 L10 10.800" fill="none" stroke="#111" stroke-width="1.050"/></svg>
<div style="left:799px;top:459px;width:1px;height:11px;background:#666"></div>
<div style="left:805px;top:462px;width:0;height:0;border:4px solid transparent;border-top:5px solid #1a1a1a;border-bottom:0"></div>
<div class="t" style="left:839px;top:458px;color:#222">尖角<span class="c">:</span></div>
<div class="t n" style="left:870px;top:458px;font-size:11px;color:#8a8a8a">3.00</div>
<div style="left:870px;top:471px;width:21px;height:1px;background:repeating-linear-gradient(90deg,#777 0 1px,transparent 1px 2px)"></div>
<div style="left:706px;top:485px;width:278px;height:17px;background:#cbcbcb"></div>
<svg style="left:709px;top:490px" width="12" height="9" viewBox="0 0 12 9"><path d="M1 1.500 H11 L6 7.500 Z" fill="#eee" stroke="#555" stroke-width="1"/></svg>
<div class="t" style="left:727px;top:486px;font-size:11px;color:#33333f;-webkit-text-stroke-width:0.100px">椭圆选项</div>
<div class="t" style="right:249px;top:511px;color:#222">开始角度<span class="c">:</span></div>
<div style="left:791px;top:515px;width:99px;height:4px;background:#d6d6d6;border:1px solid #787878;border-left:0"></div><div style="left:791px;top:519px;width:99px;height:1px;background:#f6f6f6"></div>
<svg style="left:780px;top:509px" width="12" height="14" viewBox="0 0 12 14"><defs><linearGradient id="th509" x1="0" x2="0" y1="0" y2="1"><stop offset="0" stop-color="#ececec"/><stop offset="1" stop-color="#cecece"/></linearGradient></defs><path d="M6 0.700 L11.400 5.700 V12.500 H0.600 V5.700 Z" fill="url(#th509)" stroke="#444" stroke-width="1.100"/></svg>
<div class="vb" style="left:905px;top:509px;width:48px;height:18px"><span class="t n" style="font-size:11px;top:0px">0.00</span></div>
<div class="t" style="right:249px;top:537px;color:#222">结束角度<span class="c">:</span></div>
<div style="left:791px;top:541px;width:99px;height:4px;background:#d6d6d6;border:1px solid #787878;border-left:0"></div><div style="left:791px;top:545px;width:99px;height:1px;background:#f6f6f6"></div>
<svg style="left:780px;top:535px" width="12" height="14" viewBox="0 0 12 14"><defs><linearGradient id="th535" x1="0" x2="0" y1="0" y2="1"><stop offset="0" stop-color="#ececec"/><stop offset="1" stop-color="#cecece"/></linearGradient></defs><path d="M6 0.700 L11.400 5.700 V12.500 H0.600 V5.700 Z" fill="url(#th535)" stroke="#444" stroke-width="1.100"/></svg>
<div class="vb" style="left:905px;top:535px;width:48px;height:18px"><span class="t n" style="font-size:11px;top:0px">0.00</span></div>
<div style="left:706px;top:558px;width:278px;height:1px;background:#a2a2a2"></div>
<div style="left:706px;top:559px;width:278px;height:1px;background:#dedede"></div>
<div class="t" style="right:249px;top:565px;color:#222">内径<span class="c">:</span></div>
<div style="left:791px;top:570px;width:99px;height:4px;background:#d6d6d6;border:1px solid #787878;border-left:0"></div><div style="left:791px;top:574px;width:99px;height:1px;background:#f6f6f6"></div>
<svg style="left:780px;top:564px" width="12" height="14" viewBox="0 0 12 14"><defs><linearGradient id="th564" x1="0" x2="0" y1="0" y2="1"><stop offset="0" stop-color="#ececec"/><stop offset="1" stop-color="#cecece"/></linearGradient></defs><path d="M6 0.700 L11.400 5.700 V12.500 H0.600 V5.700 Z" fill="url(#th564)" stroke="#444" stroke-width="1.100"/></svg>
<div class="vb" style="left:905px;top:564px;width:48px;height:18px"><span class="t n" style="font-size:11px;top:0px">0.00</span></div>
<div style="left:738px;top:593px;width:11px;height:11px;background:#e6e6e6;border:1px solid #555"></div>
<svg style="left:739px;top:592px" width="12" height="12" viewBox="0 0 12 12"><path d="M2 5.800 L4.500 8.500 L9.800 1.800" fill="none" stroke="#111" stroke-width="1.500"/></svg>
<div class="t" style="left:754px;top:592px;color:#222">闭合路径</div>
<div style="left:905px;top:589px;width:48px;height:18px;background:linear-gradient(#ececec,#cdcdcd);border:1px solid #6e6e6e"></div>
<div class="t" style="left:918px;top:591px;color:#222">重置</div>
<div style="left:706px;top:721px;width:278px;height:1px;background:#5e5e5e"></div>
<div style="left:706px;top:722px;width:278px;height:7px;background:#dcdcdc"></div>
<div style="left:705px;top:729px;width:279px;height:1px;background:#5e5e5e"></div>
<div class="grip" style="left:835px;top:724px;width:20px;height:3px"></div>
<div style="left:705px;top:730px;width:279px;height:7px;background:#c2c2c2"></div>
<div style="left:960px;top:729px;width:0;height:0;border-top:5px solid #333;border-left:5px solid transparent"></div>
<div style="left:969px;top:730px;width:15px;height:7px;background:#d6d6d6;border-left:1px solid #999"></div>
<!-- right dock -->
<div style="left:984px;top:50px;width:40px;height:688px;background:#d6d6d6"></div>
<div style="left:983px;top:50px;width:1px;height:688px;background:#666"></div>
<div style="left:984px;top:50px;width:1px;height:688px;background:#808080"></div>
<div style="left:984px;top:50px;width:1px;height:50px;background:#a0a0a0"></div>
<div style="left:985px;top:50px;width:1px;height:688px;background:#626262"></div>
<div style="left:986px;top:62px;width:1px;height:675px;background:#dedede"></div>
<div style="left:983px;top:234px;width:1px;height:487px;background:#d6d6d6"></div>
<div style="left:983px;top:217px;width:1px;height:15px;background:#a4a4a4"></div>
<div style="left:983px;top:297px;width:1px;height:17px;background:#cbcbcb"></div>
<div style="left:983px;top:485px;width:1px;height:17px;background:#cbcbcb"></div>
<div style="left:1023px;top:50px;width:1px;height:688px;background:#6a6a6a"></div>
<div style="left:986px;top:50px;width:37px;height:11px;background:linear-gradient(#9c9c9c,#8c8c8c)"></div>
<div style="left:986px;top:61px;width:37px;height:1px;background:#6a6a6a"></div>
<div style="left:986px;top:62px;width:37px;height:1px;background:#ececec"></div>
<svg style="left:1011px;top:52px" width="9" height="7" viewBox="0 0 9 7"><path d="M4 0.500 V6.500 L1 3.500 Z M8 0.500 V6.500 L5 3.500 Z" fill="#3a3a3a"/></svg>
<div style="left:986px;top:129px;width:37px;height:1px;background:#7a7a7a"></div>
<div style="left:986px;top:130px;width:37px;height:1px;background:#e8e8e8"></div>
<div style="left:986px;top:227px;width:37px;height:1px;background:#7a7a7a"></div>
<div style="left:986px;top:228px;width:37px;height:1px;background:#e8e8e8"></div>
<div style="left:986px;top:324px;width:37px;height:1px;background:#7a7a7a"></div>
<div style="left:986px;top:325px;width:37px;height:1px;background:#e8e8e8"></div>
<div style="left:986px;top:365px;width:37px;height:1px;background:#7a7a7a"></div>
<div style="left:986px;top:366px;width:37px;height:1px;background:#e8e8e8"></div>
<div style="left:986px;top:434px;width:37px;height:1px;background:#7a7a7a"></div>
<div style="left:986px;top:435px;width:37px;height:1px;background:#e8e8e8"></div>
<div class="grip" style="left:995px;top:66px"></div>
<div class="grip" style="left:995px;top:135px"></div>
<div class="grip" style="left:995px;top:232px"></div>
<div class="grip" style="left:995px;top:329px"></div>
<div class="grip" style="left:995px;top:370px"></div>
<div style="left:990px;top:377px;width:30px;height:25px;background:#929292;border:1px solid #7a7a7a;border-radius:4px"></div>
<div style="left:984px;top:737px;width:40px;height:1px;background:#747474"></div>
<!-- dock icons -->
<svg style="left:984px;top:0" width="40" height="440" viewBox="984 0 40 440">
<defs>
<radialGradient id="dI" cx="0.4" cy="0.3" r="0.8"><stop offset="0" stop-color="#9a9a9a"/><stop offset="0.6" stop-color="#444"/><stop offset="1" stop-color="#1c1c1c"/></radialGradient>
<linearGradient id="dW" x1="0" x2="1" y1="0" y2="1"><stop offset="0" stop-color="#fff"/><stop offset="1" stop-color="#c0c0c0"/></linearGradient>
<linearGradient id="dF" x1="0" x2="0" y1="0" y2="1"><stop offset="0" stop-color="#eee"/><stop offset="1" stop-color="#b0b0b0"/></linearGradient>
<filter id="dds" x="-30%" y="-30%" width="160%" height="170%"><feGaussianBlur in="SourceAlpha" stdDeviation="0.7"/><feOffset dx="0.3" dy="1"/><feComponentTransfer><feFuncA type="linear" slope="0.35"/></feComponentTransfer><feMerge><feMergeNode/><feMergeNode in="SourceGraphic"/></feMerge></filter>
</defs>
<g filter="url(#dds)">
<!-- colour palette -->
<path d="M997 88 Q996.500 82 1003 79.500 Q1010 77 1014 79 Q1016 81 1013.500 83.500 Q1011.500 85.500 1013.500 86.500 Q1015.500 87.500 1014 90 Q1011 93.500 1004 93 Q998 92.500 997 88 Z" fill="url(#dI)"/>
<g fill="#fff"><ellipse cx="1004.600" cy="81.800" rx="1.700" ry="1.400"/><ellipse cx="1009.200" cy="80.600" rx="1.700" ry="1.400"/><ellipse cx="1000.300" cy="85.300" rx="1.600" ry="1.500"/><ellipse cx="1001.700" cy="89.600" rx="1.700" ry="1.400"/><ellipse cx="1007" cy="89.700" rx="1.700" ry="1.400"/></g>
<!-- swatches -->
<rect x="997" y="107" width="17" height="13" fill="#2a2a2a"/>
<g>
<rect x="998" y="108" width="3" height="3" fill="#4a4a4a"/><rect x="1002" y="108" width="3" height="3" fill="#8a8a8a"/><rect x="1006" y="108" width="3" height="3" fill="#9a9a9a"/><rect x="1010" y="108" width="3" height="3" fill="#f4f4f4"/>
<rect x="998" y="112" width="3" height="3" fill="#7a7a7a"/><rect x="1002" y="112" width="3" height="3" fill="#9a9a9a"/><rect x="1006" y="112" width="3" height="3" fill="#6a6a6a"/><rect x="1010" y="112" width="3" height="3" fill="#fff"/>
<rect x="998" y="116" width="3" height="3" fill="#9a9a9a"/><rect x="1002" y="116" width="3" height="3" fill="#eee"/><rect x="1006" y="116" width="3" height="3" fill="#fff"/><rect x="1010" y="116" width="3" height="3" fill="#ddd"/>
</g>
<!-- align -->
<rect x="998.600" y="147" width="1" height="14" fill="#111"/>
<rect x="1001" y="148" width="8" height="5" fill="#7a7a7a"/>
<rect x="1001" y="155" width="12" height="5" fill="#2a2a2a"/>
<!-- info -->
<circle cx="1005.500" cy="182.500" r="8.300" fill="url(#dI)"/>
<!-- transform -->
<rect x="1000" y="205" width="11.500" height="11" fill="url(#dW)" stroke="#222" stroke-width="1.200"/>
<g fill="#111"><rect x="998.500" y="203.500" width="2.600" height="2.600"/><rect x="1004.500" y="203.500" width="2.600" height="2.600"/><rect x="1010.500" y="203.500" width="2.600" height="2.600"/><rect x="998.500" y="209.300" width="2.600" height="2.600"/><rect x="1010.500" y="209.300" width="2.600" height="2.600"/><rect x="998.500" y="215" width="2.600" height="2.600"/><rect x="1004.500" y="215" width="2.600" height="2.600"/><rect x="1010.500" y="215" width="2.600" height="2.600"/></g>
<!-- code snippets -->
<rect x="1001.500" y="243" width="12.500" height="13" fill="#fafafa" stroke="#333" stroke-width="1"/>
<path d="M1003.500 245.500 H1012 M1003.500 248 H1012 M1007 250.500 H1012 M1008 253 H1012" stroke="#333" stroke-width="1"/>
<!-- components -->
<path d="M1001 273.500 L1005.500 271.300 L1010 273.500 V279 L1005.500 281 L1001 279 Z" fill="#a0a0a0" stroke="#555" stroke-width="0.600"/>
<path d="M1005.500 275.500 L1010 273.500 V279 L1005.500 281 Z" fill="#fff"/>
<path d="M997 279.500 L1001.200 277.800 L1005.500 279.500 V285 L1001.200 287 L997 285 Z" fill="#333" stroke="#333" stroke-width="0.600"/>
<path d="M1001.200 281.500 L1005.500 279.800 V285 L1001.200 287 Z" fill="#fff"/>
<path d="M1005.500 279.500 L1010 277.800 L1014 279.500 V284.500 L1010 286.500 L1005.500 284.500 Z" fill="#555" stroke="#444" stroke-width="0.600"/>
<path d="M1010 281.300 L1014 279.700 V284.500 L1010 286.500 Z" fill="#fff"/>
<!-- motion presets -->
<circle cx="1001.200" cy="312" r="4.100" fill="#5a5a5a" stroke="#444" stroke-width="0.600"/>
<circle cx="1008" cy="306.600" r="2.900" fill="#7c7c7c" stroke="#555" stroke-width="0.600"/>
<circle cx="1010.600" cy="300.600" r="2" fill="#b0b0b0" stroke="#666" stroke-width="0.600"/>
<!-- project -->
<path d="M995 340 H1000.500 L997.800 343 Z" fill="#444"/>
<path d="M1002.500 351 V340.500 H1007 L1008.500 342.500 H1015.500 V351 Z" fill="url(#dF)" stroke="#333" stroke-width="1"/>
<g fill="#fff" stroke="#222" stroke-width="1"><rect x="1002.500" y="353.500" width="3" height="3"/><rect x="1007.500" y="353.500" width="3" height="3"/><rect x="1012.500" y="353.500" width="3" height="3"/></g>
</g>
<!-- properties (selected) -->
<path d="M998.500 384.500 L1003.500 382.300 L1008 384.500 V390 L1003.500 392.500 L998.500 390 Z" fill="#333" stroke="#222" stroke-width="0.800"/>
<path d="M1003.500 386.500 L1008 384.500 V390 L1003.500 392.500 Z" fill="#fff"/>
<path d="M998.500 384.500 L1003.500 382.300 L1008 384.500 L1003.500 386.500 Z" fill="#888"/>
<g fill="#fff" stroke="#222" stroke-width="1"><rect x="1010.500" y="382.500" width="3.500" height="3.500"/><rect x="1010.500" y="387.800" width="3.500" height="3.500"/><rect x="997.500" y="394" width="16.500" height="3.500"/></g>
<rect x="1010.500" y="394" width="3.500" height="3.500" fill="#bbb" stroke="#222" stroke-width="1"/>
<!-- library -->
<g filter="url(#dds)">
<rect x="997.500" y="411.500" width="2.600" height="13" fill="#555" stroke="#222" stroke-width="0.700"/>
<rect x="1001.200" y="410.500" width="3.800" height="14" fill="#777" stroke="#333" stroke-width="0.700"/>
<rect x="1001.200" y="412.500" width="3.800" height="1.500" fill="#ddd"/>
<path d="M1006 412 L1009.500 410.700 L1015 423 L1011.500 424.500 Z" fill="#222" stroke="#111" stroke-width="0.700"/>
<path d="M1008 413.500 L1012.500 422.500" stroke="#888" stroke-width="0.800"/>
</g>
</svg>
<div class="t" style="left:1002px;top:175px;width:8px;text-align:center;font:bold 15px/16px 'Liberation Serif',serif;height:16px;color:#fff">i</div>
<div class="t" style="left:995px;top:247px;font:bold 12px/14px 'Liberation Sans',sans-serif;letter-spacing:1px;color:#000">{}</div>
<!-- taskbar -->
<div style="left:0;top:738px;width:1024px;height:30px;background:#d4d0c8"></div>
<div style="left:0;top:739px;width:1024px;height:1px;background:#fff"></div>
<div style="left:2px;top:742px;width:47px;height:22px;background:#d4d0c8;border:1px solid #fff;border-right-color:#404040;border-bottom-color:#404040;box-shadow:inset -1px -1px 0 #808080"></div>
<svg style="left:4px;top:744px" width="16" height="16" viewBox="0 0 16 16"><path d="M2.500 2 Q5 0.500 7.800 2.300 L6.500 7.300 Q4 5.800 1.200 7 Z" fill="#f0541c"/><path d="M8.800 2.800 Q11.500 4.300 14.800 2.500 L13.500 7.500 Q10.500 9.300 7.500 7.800 Z" fill="#6cc424"/><path d="M1 8 Q3.800 6.800 6.200 8.300 L5 13.300 Q2.500 11.800 -0.200 13 Z" fill="#2c6ae0"/><path d="M7.200 8.800 Q10 10.300 13.300 8.500 L12 13.500 Q9 15.300 6 13.800 Z" fill="#f8c81c"/></svg>
<div class="t" style="left:22px;top:746px;color:#000;-webkit-text-stroke-width:0.500px">开始</div>
<svg style="left:56px;top:745px" width="17" height="17" viewBox="0 0 17 17"><circle cx="8.500" cy="8.500" r="7.500" fill="#f2f2f2" stroke="#666" stroke-width="0.800"/><path d="M8.500 1 A7.500 7.500 0 0 1 16 8.500 H12 A3.500 3.500 0 0 0 8.500 5 Z" fill="#3a8ae0"/><path d="M16 8.500 A7.500 7.500 0 0 1 8.500 16 V12 A3.500 3.500 0 0 0 12 8.500 Z" fill="#e88a1a"/><path d="M8.500 16 A7.500 7.500 0 0 1 1 8.500 H5 A3.500 3.500 0 0 0 8.500 12 Z" fill="#4ab82a"/><path d="M1 8.500 A7.500 7.500 0 0 1 8.500 1 V5 A3.500 3.500 0 0 0 5 8.500 Z" fill="#e8401a"/><circle cx="8.500" cy="8.500" r="3.800" fill="#fff"/><path d="M7.200 6.300 L11 8.500 L7.200 10.700 Z" fill="#222"/></svg>
<svg style="left:79px;top:745px" width="17" height="17" viewBox="0 0 17 17"><rect x="1" y="2.500" width="13" height="13" rx="3" fill="#3a8ae8" stroke="#1a4aa8" stroke-width="1"/><rect x="3.500" y="5" width="8" height="8" rx="1" fill="#eaf4ff"/><path d="M5 11 L9 6.500 L10.500 8 Z" fill="#1a4aa8"/><path d="M10 2 L15.500 2 L13 6 Z" fill="#e8601a"/></svg>
<svg style="left:103px;top:745px" width="17" height="17" viewBox="0 0 17 17"><circle cx="8.500" cy="8.500" r="7.500" fill="#1a6ac8" stroke="#222" stroke-width="1.200"/><circle cx="8.500" cy="8.500" r="4.500" fill="#fff"/><circle cx="8.500" cy="8.500" r="2" fill="#3a9ae8"/><path d="M8.500 3 V14 M3 8.500 H14 M4.600 4.600 L12.400 12.400 M12.400 4.600 L4.600 12.400" stroke="#3a9ae8" stroke-width="1"/></svg>
<svg style="left:130px;top:746px" width="10" height="7" viewBox="0 0 10 7"><path d="M1.500 0.800 L4 3.300 L1.500 5.800 M5.500 0.800 L8 3.300 L5.500 5.800" fill="none" stroke="#000" stroke-width="1.500"/></svg>
<div class="dith" style="left:143px;top:742px;width:160px;height:23px;border:1px solid #404040;border-right-color:#fff;border-bottom-color:#fff;box-shadow:inset 1px 1px 0 #808080"></div>
<div style="left:148px;top:745px;width:16px;height:16px;background:#3c0c0c;border:1px solid #c82020"></div>
<div class="t n" style="left:151px;top:746px;font-weight:bold;font-size:10px;color:#e84040">Fl</div>
<div class="t" style="left:168px;top:746px;color:#000">未命名-1<span style="position:relative;top:3px">*</span></div>
<svg style="left:968px;top:746px" width="14" height="16" viewBox="0 0 14 16"><path d="M4.500 1.500 L5.500 3.300 L6.500 2.500 L7.500 3.300 L8.500 2.500 L9.500 3.300 L10.500 2.500 L11.500 3.300 L13 3.500" fill="none" stroke="#000" stroke-width="0.900"/><path d="M13.500 6.300 H2.500 Q1.300 6.300 1.300 7.500 V13.300 Q1.300 14.500 2.500 14.500 H13.500" fill="#fff" stroke="#000" stroke-width="1.400"/><g fill="#000"><rect x="3.500" y="8" width="1" height="3.500"/><rect x="5.500" y="8" width="1" height="3.500"/><rect x="7.500" y="8" width="1" height="3.500"/><rect x="9.500" y="8" width="1" height="3.500"/><rect x="11.500" y="8" width="1" height="3.500"/><rect x="3" y="9.200" width="10.500" height="1"/><rect x="3" y="12.300" width="10.500" height="0.800"/></g></svg>
<div style="left:985px;top:742px;width:37px;height:24px;border:1px solid #808080;border-right-color:#fff;border-bottom-color:#fff"></div>
<svg style="left:989px;top:751px" width="10" height="7" viewBox="0 0 10 7"><path d="M4.500 0.500 L1.500 3.500 L4.500 6.500 M8.500 0.500 L5.500 3.500 L8.500 6.500" fill="none" stroke="#000" stroke-width="1.600"/></svg>
<svg style="left:1002px;top:745px" width="18" height="17" viewBox="0 0 18 17"><rect x="2" y="3.500" width="7.500" height="7" fill="#2e2e68" stroke="#3a4a9a" stroke-width="0.800"/><rect x="8.500" y="4" width="1.500" height="6" fill="#3a6ad0"/><ellipse cx="5.500" cy="13" rx="4" ry="2.200" fill="#e4e8f8" stroke="#3a4aa0" stroke-width="1"/><rect x="3.500" y="10.500" width="4" height="1.500" fill="#5a7ad8"/><path d="M11.500 3 q1.500 2.500 0 5 M13.500 1.500 q2.500 4 0 8" fill="none" stroke="#555" stroke-width="0.900"/></svg>
</body>
</html>
